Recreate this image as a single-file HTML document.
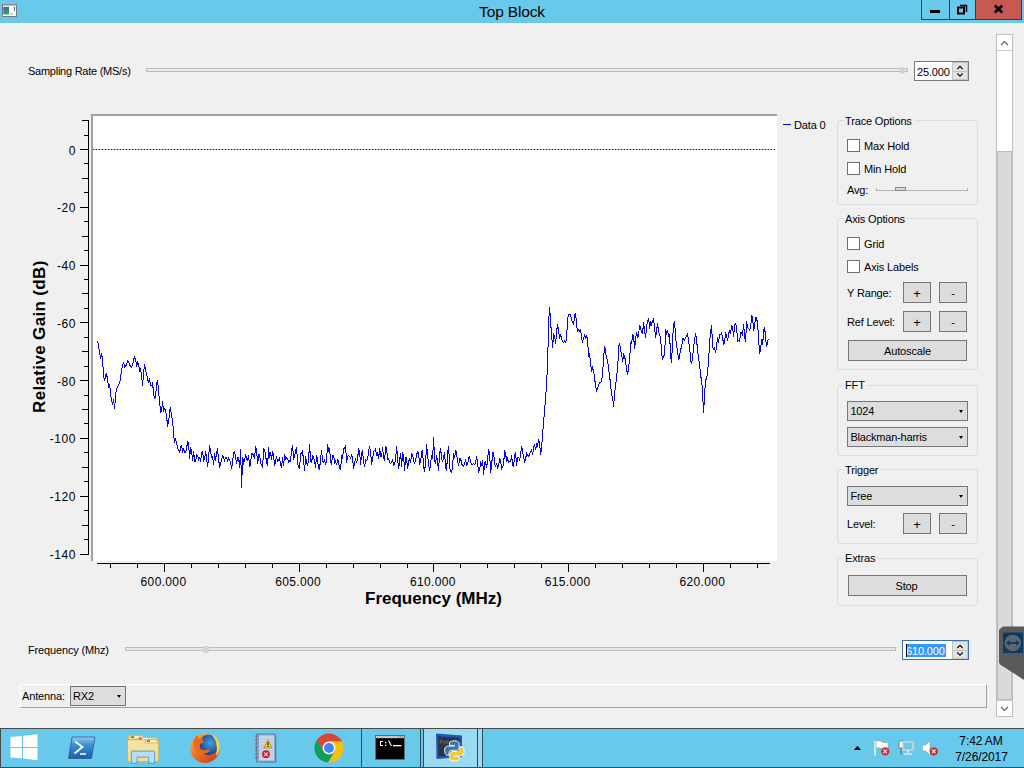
<!DOCTYPE html>
<html><head><meta charset="utf-8">
<style>
*{box-sizing:border-box}
html,body{margin:0;padding:0;width:1024px;height:768px;overflow:hidden;background:#f0f0f0;font-family:"Liberation Sans",sans-serif;color:#000}
.a{position:absolute}
.t{position:absolute;font-size:11px;line-height:11px;white-space:nowrap;letter-spacing:-0.15px}
#title{position:absolute;left:0;top:0;width:1024px;height:23px;background:#69c9ea}
#title .cap{position:absolute;left:0;width:1024px;top:3.5px;text-align:center;font-size:15.5px;line-height:15.5px;letter-spacing:-0.15px;color:#000}
.wb{position:absolute;top:0;height:20px;border:1px solid #3a3a3a;border-top:none}
.grp{position:absolute;left:837px;width:141px;border:1px solid #d5dfe5;border-radius:3px}
.gt{position:absolute;left:845px;font-size:11px;line-height:11px;background:#f0f0f0;padding:0 2px 0 1px;margin-left:-1px;letter-spacing:-0.15px}
.cb{position:absolute;left:847px;width:13px;height:13px;border:1px solid #707070;background:#fff}
.btn{position:absolute;background:#dddddd;border:1px solid #767676;font-size:11px;text-align:center;line-height:20px;letter-spacing:-0.15px}
.pl{font-size:13px;line-height:21px}
.combo{position:absolute;background:#dddddd;border:1px solid #767676;font-size:11px;line-height:18px;padding-left:2.4px;letter-spacing:-0.2px}
.combo:after{content:"";position:absolute;right:4px;top:8px;border-left:2.5px solid transparent;border-right:2.5px solid transparent;border-top:3px solid #000}
.yl{position:absolute;left:30px;width:45.9px;text-align:right;font-size:12px;line-height:14px;letter-spacing:0.5px;margin-top:1px}
.xl{position:absolute;top:575px;width:60px;text-align:center;font-size:12px;line-height:14px;letter-spacing:0.35px}
#task{position:absolute;left:0;top:728px;width:1024px;height:40px;background:#69c9ea;border-top:1px solid #4a4a4a}
</style></head><body>

<!-- title bar -->
<div id="title">
  <svg class="a" style="left:2px;top:4px" width="16" height="14" viewBox="0 0 16 14">
    <rect x="0.5" y="0.5" width="14" height="12" fill="#fff" stroke="#7a7a7a"/>
    <rect x="1" y="0" width="14" height="1.5" fill="#8a8a8a"/>
    <defs><linearGradient id="ig" x1="0" y1="0" x2="0" y2="1"><stop offset="0" stop-color="#3a66b0"/><stop offset="1" stop-color="#3aa84a"/></linearGradient></defs>
    <rect x="1.2" y="2.8" width="5.8" height="7.7" fill="url(#ig)"/>
    <rect x="11.9" y="2.8" width="1.2" height="4.2" fill="url(#ig)"/>
    <rect x="8" y="9.1" width="3" height="1.7" fill="#c8c8c8"/>
  </svg>
  <div class="cap">Top Block</div>
  <div class="wb" style="left:921px;width:29px;background:#69c9ea"></div>
  <div class="wb" style="left:949px;width:27px;background:#69c9ea"></div>
  <div class="wb" style="left:975px;width:47px;background:#c75a50"></div>
  <div class="a" style="left:930px;top:10px;width:10px;height:3px;background:#000"></div>
  <svg class="a" style="left:957px;top:4px" width="11" height="11" viewBox="0 0 11 11">
    <path d="M3 1.5 H9.5 V8" fill="none" stroke="#000" stroke-width="1.5"/>
    <rect x="1" y="3.5" width="6" height="6" fill="none" stroke="#000" stroke-width="2"/>
  </svg>
  <svg class="a" style="left:993px;top:3.5px" width="11" height="10" viewBox="0 0 11 10">
    <path d="M1.8 1.5 L9.2 8.5 M9.2 1.5 L1.8 8.5" stroke="#000" stroke-width="2.6"/>
  </svg>
</div>

<!-- sampling rate row -->
<div class="t" style="left:28px;top:66px;letter-spacing:-0.25px">Sampling Rate (MS/s)</div>
<div class="a" style="left:146px;top:68px;width:762px;height:4px;background:#e7eaea;border:1px solid #bcbcbc"></div>
<div class="a" style="left:899.5px;top:66.5px;width:5.5px;height:7px;background:#d4d4d4;border-radius:2.5px"></div>
<div class="a" style="left:914px;top:61px;width:55px;height:20px;background:#fff;border:1px solid #7a7a7a"></div>
<div class="t" style="left:917px;top:67px">25.000</div>
<div class="a" style="left:952px;top:62px;width:16px;height:10px;background:#e3e3e3;border:1px solid #c4c4c4"></div>
<div class="a" style="left:952px;top:71px;width:16px;height:9px;background:#e3e3e3;border:1px solid #c4c4c4"></div>
<svg class="a" style="left:955px;top:63px" width="10" height="18" viewBox="0 0 10 18">
  <path d="M2.3 6 L5 3.3 L7.7 6 M2.3 10.5 L5 13.2 L7.7 10.5" fill="none" stroke="#111" stroke-width="1.2"/>
</svg>

<!-- plot -->
<div class="a" style="left:91px;top:114px;width:686px;height:447px;background:#fff;border-left:2px solid #a0a0a0;border-top:2px solid #a0a0a0"></div>
<svg class="a" style="left:0;top:0" width="1024" height="768" viewBox="0 0 1024 768">
  <g stroke="#000" stroke-width="1" shape-rendering="crispEdges">
<line x1="88.5" y1="120" x2="88.5" y2="555" />
<line x1="82" y1="120.5" x2="89" y2="120.5" />
<line x1="84" y1="135.5" x2="89" y2="135.5" />
<line x1="80" y1="149.5" x2="89" y2="149.5" />
<line x1="84" y1="163.5" x2="89" y2="163.5" />
<line x1="82" y1="178.5" x2="89" y2="178.5" />
<line x1="84" y1="192.5" x2="89" y2="192.5" />
<line x1="80" y1="207.5" x2="89" y2="207.5" />
<line x1="84" y1="221.5" x2="89" y2="221.5" />
<line x1="82" y1="236.5" x2="89" y2="236.5" />
<line x1="84" y1="250.5" x2="89" y2="250.5" />
<line x1="80" y1="265.5" x2="89" y2="265.5" />
<line x1="84" y1="279.5" x2="89" y2="279.5" />
<line x1="82" y1="293.5" x2="89" y2="293.5" />
<line x1="84" y1="308.5" x2="89" y2="308.5" />
<line x1="80" y1="322.5" x2="89" y2="322.5" />
<line x1="84" y1="337.5" x2="89" y2="337.5" />
<line x1="82" y1="351.5" x2="89" y2="351.5" />
<line x1="84" y1="366.5" x2="89" y2="366.5" />
<line x1="80" y1="380.5" x2="89" y2="380.5" />
<line x1="84" y1="395.5" x2="89" y2="395.5" />
<line x1="82" y1="409.5" x2="89" y2="409.5" />
<line x1="84" y1="423.5" x2="89" y2="423.5" />
<line x1="80" y1="438.5" x2="89" y2="438.5" />
<line x1="84" y1="452.5" x2="89" y2="452.5" />
<line x1="82" y1="467.5" x2="89" y2="467.5" />
<line x1="84" y1="481.5" x2="89" y2="481.5" />
<line x1="80" y1="496.5" x2="89" y2="496.5" />
<line x1="84" y1="510.5" x2="89" y2="510.5" />
<line x1="82" y1="525.5" x2="89" y2="525.5" />
<line x1="84" y1="539.5" x2="89" y2="539.5" />
<line x1="80" y1="554.5" x2="89" y2="554.5" />
<line x1="97" y1="563.5" x2="770" y2="563.5" />
<line x1="110.5" y1="563" x2="110.5" y2="568" />
<line x1="137.5" y1="563" x2="137.5" y2="568" />
<line x1="164.5" y1="563" x2="164.5" y2="572" />
<line x1="191.5" y1="563" x2="191.5" y2="568" />
<line x1="218.5" y1="563" x2="218.5" y2="568" />
<line x1="245.5" y1="563" x2="245.5" y2="568" />
<line x1="272.5" y1="563" x2="272.5" y2="568" />
<line x1="299.5" y1="563" x2="299.5" y2="572" />
<line x1="326.5" y1="563" x2="326.5" y2="568" />
<line x1="353.5" y1="563" x2="353.5" y2="568" />
<line x1="380.5" y1="563" x2="380.5" y2="568" />
<line x1="407.5" y1="563" x2="407.5" y2="568" />
<line x1="433.5" y1="563" x2="433.5" y2="572" />
<line x1="460.5" y1="563" x2="460.5" y2="568" />
<line x1="487.5" y1="563" x2="487.5" y2="568" />
<line x1="514.5" y1="563" x2="514.5" y2="568" />
<line x1="541.5" y1="563" x2="541.5" y2="568" />
<line x1="568.5" y1="563" x2="568.5" y2="572" />
<line x1="595.5" y1="563" x2="595.5" y2="568" />
<line x1="622.5" y1="563" x2="622.5" y2="568" />
<line x1="649.5" y1="563" x2="649.5" y2="568" />
<line x1="676.5" y1="563" x2="676.5" y2="568" />
<line x1="703.5" y1="563" x2="703.5" y2="572" />
<line x1="730.5" y1="563" x2="730.5" y2="568" />
<line x1="757.5" y1="563" x2="757.5" y2="568" />
  </g>
  <line x1="93" y1="149.5" x2="775" y2="149.5" stroke="#00ffff" stroke-width="1" shape-rendering="crispEdges"/>
  <line x1="93" y1="149.5" x2="775" y2="149.5" stroke="#800000" stroke-width="1" stroke-dasharray="1 2" shape-rendering="crispEdges"/>
  <polyline points="97.6,340.9 98.6,346.2 99.6,352.7 100.6,359.1 101.6,353.5 102.6,360.8 103.6,376.0 104.6,381.2 105.6,374.9 106.6,373.9 107.6,380.0 108.6,386.4 109.6,384.0 110.6,394.2 111.6,400.9 112.6,403.6 113.6,398.6 114.6,409 115.6,393.8 116.6,388.9 117.6,387.1 118.6,384.3 119.6,383.5 120.6,377.8 121.6,369.0 122.6,366.1 123.6,361.8 124.6,367.2 125.6,365.7 126.6,364.9 127.6,360.9 128.6,362.1 129.6,365.0 130.6,366.0 131.6,367.2 132.6,364.7 133.6,359.8 134.6,356.9 135.6,359.0 136.6,366.8 137.6,362.5 138.6,364.7 139.6,370.7 140.6,368.9 141.6,375.5 142.6,386.4 143.6,372.0 144.6,364.1 145.6,371.1 146.6,373.1 147.6,379.3 148.6,382.0 149.6,379.4 150.6,385.0 151.6,385.7 152.6,383.4 153.6,393.4 154.6,399.1 155.6,395.8 156.6,383.4 157.6,381.2 158.6,391.1 159.6,402.4 160.6,412.1 161.6,410.6 162.6,401.4 163.6,411.5 164.6,408.8 165.6,410.0 166.6,417.3 167.6,425.1 168.6,422.6 169.6,411.0 170.6,407.4 171.6,417.6 172.6,418.5 173.6,435.5 174.6,441.8 175.6,439.2 176.6,442.8 177.6,448.0 178.6,450.2 179.6,452.4 180.6,447.8 181.6,444.7 182.6,452.9 183.6,447.9 184.6,452.4 185.6,452.9 186.6,448.7 187.6,441.0 188.6,443.9 189.6,458.5 190.6,448.3 191.6,450.3 192.6,461.4 193.6,451.3 194.6,461.4 195.6,461.9 196.6,455.0 197.6,455.3 198.6,459.4 199.6,457.7 200.6,461.9 201.6,453.5 202.6,450.8 203.6,460.9 204.6,459.4 205.6,450.6 206.6,458.7 207.6,467.2 208.6,456.7 209.6,445.2 210.6,451.5 211.6,457.2 212.6,456.5 213.6,464.5 214.6,453.5 215.6,460.5 216.6,451.7 217.6,449.4 218.6,459.5 219.6,466.7 220.6,464.6 221.6,458.8 222.6,456.2 223.6,457.1 224.6,460.7 225.6,457.3 226.6,457.7 227.6,460.6 228.6,458.1 229.6,460.9 230.6,461.4 231.6,469.1 232.6,461.9 233.6,452.8 234.6,452.0 235.6,456.6 236.6,463.9 237.6,457.8 238.6,457.7 239.6,467.9 240.6,449.3 241.6,488 242.6,456.7 243.6,463.2 244.6,460.9 245.6,454.3 246.6,459.0 247.6,460.5 248.6,454.9 249.6,467.2 250.6,463.6 251.6,453.4 252.6,453.6 253.6,456.0 254.6,457.7 255.6,446.4 256.6,450.7 257.6,464.3 258.6,455.1 259.6,454.2 260.6,462.6 261.6,465.2 262.6,467.4 263.6,448.8 264.6,449.5 265.6,455.4 266.6,462.9 267.6,466.4 268.6,447.5 269.6,457.8 270.6,452.3 271.6,459.7 272.6,451.3 273.6,455.9 274.6,465.9 275.6,460.2 276.6,457.2 277.6,461.4 278.6,460.0 279.6,456.9 280.6,465.7 281.6,466.9 282.6,456.9 283.6,466.4 284.6,454.4 285.6,459.4 286.6,457.9 287.6,458.2 288.6,462.0 289.6,460.5 290.6,461.3 291.6,449.4 292.6,445.2 293.6,459.6 294.6,456.7 295.6,451.1 296.6,447.4 297.6,463.7 298.6,467.5 299.6,468.2 300.6,453.3 301.6,453.3 302.6,451.2 303.6,461.5 304.6,470.5 305.6,456.2 306.6,462.7 307.6,465.9 308.6,458.3 309.6,444.3 310.6,461.3 311.6,462.7 312.6,455.2 313.6,457.9 314.6,461.2 315.6,467.8 316.6,454.6 317.6,460.4 318.6,468.5 319.6,469.4 320.6,457.8 321.6,450.2 322.6,461.2 323.6,462.1 324.6,459.2 325.6,465.4 326.6,458.7 327.6,444.4 328.6,450.8 329.6,448.8 330.6,461.7 331.6,463.9 332.6,455.4 333.6,455.3 334.6,462.7 335.6,460.9 336.6,465.3 337.6,459.3 338.6,462.3 339.6,467.8 340.6,469.5 341.6,455.2 342.6,458.7 343.6,448.2 344.6,448.1 345.6,446.1 346.6,463.0 347.6,456.2 348.6,455.8 349.6,456.7 350.6,458.0 351.6,455.0 352.6,458.3 353.6,469.4 354.6,462.2 355.6,459.1 356.6,462.9 357.6,458.2 358.6,449.3 359.6,451.7 360.6,464.6 361.6,452.7 362.6,450.7 363.6,462.9 364.6,466.5 365.6,459.6 366.6,460.7 367.6,459.4 368.6,450.9 369.6,446.0 370.6,452.2 371.6,464.9 372.6,458.9 373.6,451.0 374.6,450.8 375.6,448.7 376.6,456.2 377.6,453.3 378.6,459.0 379.6,448.2 380.6,456.2 381.6,456.6 382.6,446.8 383.6,458.7 384.6,460.0 385.6,446.9 386.6,448.4 387.6,459.7 388.6,458.8 389.6,462.3 390.6,463.6 391.6,462.5 392.6,459.8 393.6,465.0 394.6,463.7 395.6,460.5 396.6,445.6 397.6,458.1 398.6,469.4 399.6,460.2 400.6,452.6 401.6,466.7 402.6,452.5 403.6,456.2 404.6,470.6 405.6,457.6 406.6,458.1 407.6,469.1 408.6,461.2 409.6,459.0 410.6,462.6 411.6,454.1 412.6,454.7 413.6,459.7 414.6,464.4 415.6,459.5 416.6,455.5 417.6,450.8 418.6,454.1 419.6,464.0 420.6,461.8 421.6,452.6 422.6,450.1 423.6,468.4 424.6,470.6 425.6,463.0 426.6,444.4 427.6,455.3 428.6,463.9 429.6,470.7 430.6,463.1 431.6,455.6 432.6,458.7 433.6,437 434.6,460.2 435.6,463.7 436.6,455.3 437.6,463.0 438.6,471.1 439.6,452.9 440.6,448.5 441.6,458.1 442.6,462.3 443.6,457.7 444.6,451.6 445.6,468.3 446.6,470.5 447.6,453.5 448.6,446.1 449.6,466.5 450.6,471.8 451.6,472.6 452.6,465.5 453.6,453.2 454.6,457.8 455.6,450.1 456.6,453.4 457.6,461.1 458.6,466.2 459.6,458.7 460.6,458.1 461.6,463.7 462.6,465.5 463.6,466.1 464.6,463.5 465.6,459.4 466.6,465.4 467.6,464.6 468.6,457.6 469.6,456.7 470.6,462.2 471.6,464.0 472.6,464.6 473.6,463.6 474.6,464.2 475.6,463.1 476.6,456.1 477.6,463.9 478.6,472.5 479.6,469.8 480.6,462.8 481.6,465.0 482.6,459.8 483.6,475 484.6,462.1 485.6,461.9 486.6,468.2 487.6,459.6 488.6,449.0 489.6,453.1 490.6,472.5 491.6,466.4 492.6,452.3 493.6,452.4 494.6,463.7 495.6,467.2 496.6,462.8 497.6,467.4 498.6,465.5 499.6,458.9 500.6,460.4 501.6,468.8 502.6,467.1 503.6,464.0 504.6,451.0 505.6,452.6 506.6,461.9 507.6,458.5 508.6,462.2 509.6,461.5 510.6,461.7 511.6,455.3 512.6,465.5 513.6,466.4 514.6,455.0 515.6,452.2 516.6,465.6 517.6,457.2 518.6,457.1 519.6,460.0 520.6,455.1 521.6,445.6 522.6,451.4 523.6,457.1 524.6,461.6 525.6,459.3 526.6,452.6 527.6,455.5 528.6,456.6 529.6,454.0 530.6,451.7 531.6,449.8 532.6,455.0 533.6,447.1 534.6,445.1 535.6,450.2 536.6,443.9 537.6,446.0 538.6,439.3 539.6,443.8 540.6,454.5 541.6,447.8 542.6,434.0 543.6,421.5 544.6,409.7 545.6,399.2 546.6,382.3 547.6,365.0 548.6,321.9 549.6,307 550.6,322.4 551.6,334.7 552.6,348.0 553.6,334.1 554.6,335.8 555.6,343.7 556.6,331.2 557.6,324.5 558.6,331.0 559.6,339.0 560.6,334.6 561.6,338.4 562.6,341.4 563.6,342.3 564.6,340.8 565.6,342.4 566.6,338.6 567.6,318.8 568.6,314.9 569.6,314.6 570.6,314.7 571.6,320.1 572.6,322.0 573.6,325.0 574.6,314.3 575.6,313.4 576.6,325.6 577.6,330.8 578.6,330.0 579.6,331.4 580.6,329.5 581.6,338.7 582.6,341.6 583.6,338.5 584.6,334.1 585.6,339.4 586.6,334.8 587.6,341.3 588.6,355.5 589.6,353.8 590.6,363.9 591.6,372.4 592.6,366.5 593.6,371.8 594.6,378.1 595.6,386.1 596.6,390.7 597.6,388.7 598.6,384.4 599.6,383.0 600.6,382.2 601.6,381.7 602.6,373.2 603.6,358.3 604.6,345.6 605.6,352.1 606.6,358.6 607.6,359.8 608.6,369.5 609.6,375.8 610.6,384.8 611.6,395.2 612.6,396.9 613.6,407.3 614.6,391.9 615.6,387.1 616.6,375.6 617.6,370.1 618.6,347.0 619.6,343.3 620.6,350.4 621.6,353.4 622.6,362.3 623.6,354.5 624.6,356.5 625.6,361.4 626.6,369.7 627.6,374.8 628.6,366.7 629.6,359.9 630.6,343.1 631.6,343.8 632.6,335.3 633.6,336.3 634.6,349.0 635.6,338.7 636.6,331.7 637.6,338.2 638.6,334.5 639.6,325.0 640.6,328.1 641.6,332.9 642.6,333.2 643.6,321.8 644.6,331.9 645.6,337.6 646.6,325.8 647.6,320.9 648.6,317.9 649.6,328.9 650.6,321.2 651.6,324.3 652.6,321.4 653.6,319.1 654.6,328.7 655.6,337.6 656.6,330.7 657.6,322.7 658.6,332.2 659.6,333.8 660.6,338.5 661.6,352.9 662.6,360.4 663.6,355.5 664.6,355.9 665.6,328.8 666.6,333.4 667.6,330.8 668.6,336.8 669.6,333.8 670.6,357.1 671.6,362.6 672.6,339.1 673.6,324.3 674.6,321.3 675.6,337.5 676.6,345.1 677.6,351.1 678.6,359.6 679.6,357.1 680.6,348.2 681.6,348.5 682.6,338.3 683.6,338.8 684.6,340.3 685.6,337.5 686.6,335.8 687.6,333.0 688.6,342.5 689.6,346.3 690.6,360.7 691.6,363.3 692.6,358.0 693.6,346.6 694.6,339.7 695.6,333.1 696.6,340.0 697.6,350.8 698.6,358.5 699.6,363.5 700.6,377.0 701.6,377.7 702.6,394.9 703.6,413 704.6,393.2 705.6,380.3 706.6,378.5 707.6,371.7 708.6,360.2 709.6,342.6 710.6,331.8 711.6,325.4 712.6,346.6 713.6,349.0 714.6,347.6 715.6,352.9 716.6,345.7 717.6,337.3 718.6,342.5 719.6,334.9 720.6,334.3 721.6,332.8 722.6,337.6 723.6,344.4 724.6,343.0 725.6,331.9 726.6,335.9 727.6,341.4 728.6,334.1 729.6,330.3 730.6,334.3 731.6,324.8 732.6,327.4 733.6,336.5 734.6,324.9 735.6,324.0 736.6,327.3 737.6,341.4 738.6,340.3 739.6,341.7 740.6,332.9 741.6,333.0 742.6,335.0 743.6,323.8 744.6,337.7 745.6,341.5 746.6,321.3 747.6,327.2 748.6,328.8 749.6,330.0 750.6,328.3 751.6,314.8 752.6,317.3 753.6,331.4 754.6,324.6 755.6,317.7 756.6,317.9 757.6,324.0 758.6,338.8 759.6,353.5 760.6,349.7 761.6,338.7 762.6,345.1 763.6,331.5 764.6,326.8 765.6,338.3 766.6,347.2 767.6,341.0 768.6,338.9" fill="none" stroke="#0000ff" stroke-width="1" shape-rendering="crispEdges"/>
  <line x1="783" y1="124.5" x2="791" y2="124.5" stroke="#0000ff" stroke-width="1" shape-rendering="crispEdges"/>
</svg>
<div class="yl" style="top:142.5px">0</div><div class="yl" style="top:200.3px">-20</div><div class="yl" style="top:258.1px">-40</div><div class="yl" style="top:315.9px">-60</div><div class="yl" style="top:373.6px">-80</div><div class="yl" style="top:431.4px">-100</div><div class="yl" style="top:489.2px">-120</div><div class="yl" style="top:547.0px">-140</div>
<div class="xl" style="left:133.5px">600.000</div><div class="xl" style="left:268.2px">605.000</div><div class="xl" style="left:402.9px">610.000</div><div class="xl" style="left:537.7px">615.000</div><div class="xl" style="left:672.4px">620.000</div>
<div class="t" style="left:794px;top:120px">Data 0</div>
<div class="a" style="left:31px;top:413px;transform-origin:0 0;transform:rotate(-90deg);font-size:17px;line-height:17px;font-weight:bold;white-space:nowrap;letter-spacing:0.35px">Relative Gain (dB)</div>
<div class="a" style="left:365px;top:590px;font-size:17px;line-height:17px;font-weight:bold;white-space:nowrap">Frequency (MHz)</div>

<!-- right panel -->
<div class="grp" style="top:120px;height:85px"></div>
<div class="gt" style="top:116px">Trace Options</div>
<div class="cb" style="top:139px"></div><div class="t" style="left:864px;top:141px">Max Hold</div>
<div class="cb" style="top:162px"></div><div class="t" style="left:864px;top:164px">Min Hold</div>
<div class="t" style="left:847px;top:185px">Avg:</div>
<div class="a" style="left:876px;top:188px;width:92px;height:3px;border:1px solid #b5b5b5;border-top:none"></div>
<div class="a" style="left:895px;top:187px;width:11px;height:4px;background:#d8d8d8;border:1px solid #8a8a8a"></div>

<div class="grp" style="top:218px;height:152px"></div>
<div class="gt" style="top:214px">Axis Options</div>
<div class="cb" style="top:237px"></div><div class="t" style="left:864px;top:239px">Grid</div>
<div class="cb" style="top:260px"></div><div class="t" style="left:864px;top:262px">Axis Labels</div>
<div class="t" style="left:847px;top:288px">Y Range:</div>
<div class="btn pl" style="left:903px;top:282px;width:28px;height:21px">+</div>
<div class="btn" style="left:939px;top:282px;width:28px;height:21px">-</div>
<div class="t" style="left:847px;top:317px">Ref Level:</div>
<div class="btn pl" style="left:903px;top:311px;width:28px;height:21px">+</div>
<div class="btn" style="left:939px;top:311px;width:28px;height:21px">-</div>
<div class="btn" style="left:848px;top:340px;width:119px;height:21px">Autoscale</div>

<div class="grp" style="top:385px;height:71px"></div>
<div class="gt" style="top:380px">FFT</div>
<div class="combo" style="left:847px;top:401px;width:121px;height:20px">1024</div>
<div class="combo" style="left:847px;top:427px;width:121px;height:20px">Blackman-harris</div>

<div class="grp" style="top:469px;height:75px"></div>
<div class="gt" style="top:465px">Trigger</div>
<div class="combo" style="left:847px;top:486px;width:121px;height:20px">Free</div>
<div class="t" style="left:847px;top:519px">Level:</div>
<div class="btn pl" style="left:903px;top:513px;width:28px;height:21px">+</div>
<div class="btn" style="left:939px;top:513px;width:28px;height:21px">-</div>

<div class="grp" style="top:558px;height:48px"></div>
<div class="gt" style="top:553px">Extras</div>
<div class="btn" style="left:848px;top:575px;width:119px;height:21px;padding-right:2px;line-height:21px">Stop</div>

<!-- frequency row -->
<div class="t" style="left:28px;top:645px">Frequency (Mhz)</div>
<div class="a" style="left:125px;top:647px;width:771px;height:4px;background:#e7eaea;border:1px solid #bcbcbc"></div>
<div class="a" style="left:203px;top:645.5px;width:5.5px;height:7px;background:#d4d4d4;border-radius:2.5px"></div>
<div class="a" style="left:902px;top:640px;width:67px;height:20px;background:#fff;border:1px solid #3c6fb0"></div>
<div class="a" style="left:906px;top:644px;width:40px;height:13px;background:#3399ff"></div>
<div class="t" style="left:906px;top:646px;color:#fff">610.000</div>
<div class="a" style="left:906px;top:644px;width:1px;height:13px;background:#000"></div>
<div class="a" style="left:952px;top:641px;width:16px;height:10px;background:#e3e3e3;border:1px solid #c4c4c4"></div>
<div class="a" style="left:952px;top:650px;width:16px;height:9px;background:#e3e3e3;border:1px solid #c4c4c4"></div>
<svg class="a" style="left:955px;top:642px" width="10" height="18" viewBox="0 0 10 18">
  <path d="M2.3 6 L5 3.3 L7.7 6 M2.3 10.5 L5 13.2 L7.7 10.5" fill="none" stroke="#111" stroke-width="1.2"/>
</svg>

<!-- antenna row -->
<div class="a" style="left:20px;top:684px;width:967px;height:24px;border-top:1px solid #fff;border-left:1px solid #fff;border-bottom:1px solid #a0a0a0;border-right:1px solid #a0a0a0"></div>
<div class="t" style="left:22px;top:691px">Antenna:</div>
<div class="combo" style="left:70px;top:686px;width:56px;height:20px;padding-left:2px">RX2</div>

<!-- scrollbar -->
<div class="a" style="left:996px;top:34px;width:17px;height:683px;border:1px solid #bfbfbf;background:#fff"></div>
<div class="a" style="left:997px;top:50px;width:15px;height:1px;background:#c8c8c8"></div>
<div class="a" style="left:997px;top:151px;width:15px;height:549px;background:#dadada;border:1px solid #bcbcbc"></div>
<div class="a" style="left:997px;top:700px;width:15px;height:1px;background:#c8c8c8"></div>
<svg class="a" style="left:997px;top:37px" width="15" height="14" viewBox="0 0 15 14"><path d="M4 8 L7.5 4.5 L11 8" fill="none" stroke="#606060" stroke-width="1.2"/></svg>
<svg class="a" style="left:997px;top:702px" width="15" height="14" viewBox="0 0 15 14"><path d="M4 5 L7.5 8.5 L11 5" fill="none" stroke="#606060" stroke-width="1.2"/></svg>

<!-- teamviewer tab -->
<svg class="a" style="left:998px;top:625.5px" width="26" height="56" viewBox="0 0 26 56">
  <path d="M3.5 1.5 L5 0.5 L26 0.5 L26 54 L6 41 Q1 38.5 1 36 V4 Z" fill="#5a5a5a"/>
  <rect x="5" y="6.5" width="20" height="20.5" fill="#0c3a62"/>
  <circle cx="14.8" cy="17" r="8.3" fill="#5b6670"/>
  <path d="M9 17 L20.6 17" stroke="#0c3a62" stroke-width="1.8"/>
  <path d="M8 17 L11.5 14 V20 Z M21.6 17 L18.1 14 V20 Z" fill="#0c3a62"/>
</svg>

<!-- taskbar -->
<div id="task"></div>
<svg class="a" style="left:0;top:728px" width="1024" height="40" viewBox="0 728 1024 40">
  <!-- borders -->
  <rect x="0" y="728" width="1024" height="1" fill="#4a4a4a"/>
  <rect x="0" y="767" width="1024" height="1" fill="#4a4a4a"/>
  <rect x="0" y="728" width="1" height="40" fill="#4a4a4a"/>
  <!-- windows logo -->
  <g fill="#fff">
    <polygon points="10.5,737 22,735.9 22,747 10.5,747"/>
    <polygon points="23,735.7 37.5,734.3 37.5,747 23,747"/>
    <polygon points="10.5,748 22,748 22,758.4 10.5,757.4"/>
    <polygon points="23,748 37.5,748 37.5,760.3 23,758.5"/>
  </g>
  <!-- powershell -->
  <defs>
    <linearGradient id="psg" x1="0" y1="0" x2="0" y2="1"><stop offset="0" stop-color="#9cc9ee"/><stop offset="0.35" stop-color="#3f8fd6"/><stop offset="1" stop-color="#1b5fae"/></linearGradient>
    <linearGradient id="fold" x1="0" y1="0" x2="0" y2="1"><stop offset="0" stop-color="#fbe7a6"/><stop offset="1" stop-color="#eccb6a"/></linearGradient>
    <radialGradient id="ffg" cx="0.6" cy="0.4" r="0.6"><stop offset="0" stop-color="#3ea0e0"/><stop offset="1" stop-color="#1d3f8a"/></radialGradient>
    <linearGradient id="fxo" x1="0" y1="0" x2="1" y2="1"><stop offset="0" stop-color="#ffb43a"/><stop offset="0.6" stop-color="#e8601c"/><stop offset="1" stop-color="#c8361a"/></linearGradient>
  </defs>
  <polygon points="72,737 95,737 91.5,758.5 68.5,758.5" fill="url(#psg)" stroke="#2a5d9a" stroke-width="0.8"/>
  <path d="M75 741.5 L82.5 747 L74.5 753.5" fill="none" stroke="#fff" stroke-width="1.8"/>
  <path d="M80 754 L86 754" stroke="#fff" stroke-width="1.5"/>
  <!-- explorer -->
  <path d="M128.5 739.5 V736 Q128.5 735.2 129.5 735.2 H143 Q143.8 735.2 143.8 736 V739.5 Z" fill="#f0d890" stroke="#d2a850" stroke-width="0.6"/>
  <rect x="131" y="736.2" width="3.2" height="1.8" fill="#1cc01c"/>
  <rect x="134.2" y="736.4" width="5.6" height="1.4" fill="#fff"/>
  <path d="M137.6 741 V738.2 Q137.6 737.4 138.6 737.4 H156.8 Q157.6 737.4 157.6 738.2 V741 Z" fill="#f0d890" stroke="#d2a850" stroke-width="0.6"/>
  <rect x="139" y="737.9" width="2.8" height="2" fill="#d83a24"/>
  <rect x="141.8" y="738.2" width="5.8" height="1.4" fill="#fff"/>
  <rect x="127.4" y="739.8" width="31.2" height="22" rx="0.8" fill="url(#fold)" stroke="#d2a850" stroke-width="0.8"/>
  <path d="M145.2 743.8 V740.4 Q145.2 739.6 146 739.6 H157.6 Q158.2 739.6 158.2 740.4 V743.8 Z" fill="#f0d890" stroke="#d2a850" stroke-width="0.6"/>
  <rect x="147" y="740.2" width="3" height="1.8" fill="#1e90e8"/>
  <rect x="150" y="740.4" width="5.2" height="1.4" fill="#fff"/>
  <rect x="128.4" y="743.6" width="29.4" height="17.4" fill="#f7e3a0" opacity="0.7"/>
  <path d="M131.3 763.2 V752.2 Q131.3 751.1 132.4 751.1 H153.6 Q154.7 751.1 154.7 752.2 V763.2 H148.7 V757.2 H137.1 V763.2 Z" fill="#b6def4" stroke="#3d9ad8" stroke-width="0.9"/>
  <!-- firefox -->
  <circle cx="205" cy="748.5" r="14.5" fill="url(#fxo)"/>
  <circle cx="208.5" cy="745" r="10.2" fill="url(#ffg)"/>
  <path d="M193.5 741 Q195 736 197.5 735.5 L198.5 739 Q201 738 203 736.5 L202 740.5 Q204.5 741.5 203.5 743 L200.5 743.5 Q198.5 747 201.5 749.5 Q205 751 208 749.5 L210.5 750 Q208 753.5 202.5 754 Q195.5 752.5 193.5 746 Z" fill="#ea6a1e"/>
  <path d="M210.5 734.2 Q218.5 736.5 219.8 746 Q219.8 752 216 756 Q217.8 749 216.2 742.5 Q214.5 737 210.5 734.2 Z" fill="#ffd23a"/>
  <!-- event viewer -->
  <path d="M258 762 L277 763 L277 736 Z" fill="#4a8ab0" opacity="0.35"/>
  <rect x="256.5" y="734" width="19" height="28" fill="#8ea8d0" stroke="#56709e" stroke-width="0.8"/>
  <rect x="259" y="735.5" width="15" height="25" fill="#c6d4ec"/>
  <g stroke="#a8b8d4" stroke-width="0.6"><line x1="259" y1="739" x2="274" y2="739"/><line x1="259" y1="742" x2="274" y2="742"/><line x1="259" y1="745" x2="274" y2="745"/><line x1="259" y1="748" x2="274" y2="748"/><line x1="259" y1="751" x2="274" y2="751"/><line x1="259" y1="754" x2="274" y2="754"/><line x1="259" y1="757" x2="274" y2="757"/></g>
  <g fill="none" stroke="#7a7f8a" stroke-width="0.8">
    <ellipse cx="256.5" cy="736.5" rx="1.6" ry="1"/><ellipse cx="256.5" cy="740" rx="1.6" ry="1"/><ellipse cx="256.5" cy="743.5" rx="1.6" ry="1"/><ellipse cx="256.5" cy="747" rx="1.6" ry="1"/><ellipse cx="256.5" cy="750.5" rx="1.6" ry="1"/><ellipse cx="256.5" cy="754" rx="1.6" ry="1"/><ellipse cx="256.5" cy="757.5" rx="1.6" ry="1"/>
  </g>
  <polygon points="268,739.8 272.2,748 263.8,748" fill="#f4d000" stroke="#8a7000" stroke-width="0.5"/>
  <rect x="267.5" y="742.3" width="1" height="3" fill="#000"/><rect x="267.5" y="746" width="1" height="1" fill="#000"/>
  <circle cx="266" cy="754.2" r="3.9" fill="#d42020"/>
  <path d="M264.4 752.6 L267.6 755.8 M267.6 752.6 L264.4 755.8" stroke="#fff" stroke-width="1.1"/>
  <!-- chrome -->
  <g transform="translate(329,748)">
    <path d="M-12.1 -8.16 A14.6 14.6 0 0 1 13.12 -6.4 L0 -6.4 L0 0 L-5.54 3.2 Z" fill="#db4437"/>
    <path d="M13.12 -6.4 A14.6 14.6 0 0 1 -1.02 14.56 L5.54 3.2 L0 0 L0 -6.4 Z" fill="#f4c20d"/>
    <path d="M-1.02 14.56 A14.6 14.6 0 0 1 -12.1 -8.16 L-5.54 3.2 L0 0 L5.54 3.2 Z" fill="#0f9d58"/>
    <circle r="6.4" fill="#fff"/>
    <circle r="5" fill="#4285f4"/>
  </g>
  <!-- cmd button frame -->
  <rect x="361" y="729" width="1" height="38" fill="#2f4b56"/>
  <rect x="420" y="729" width="1" height="38" fill="#2f4b56"/>
  <rect x="424" y="729" width="54" height="38" fill="#9bdaf0"/>
  <rect x="423" y="729" width="1" height="38" fill="#2f4b56"/>
  <rect x="477" y="729" width="1" height="38" fill="#2f4b56"/>
  <rect x="478" y="729" width="4" height="38" fill="#9bdaf0"/>
  <rect x="482" y="729" width="1" height="38" fill="#2f4b56"/>
  <!-- cmd icon -->
  <rect x="375.5" y="735.5" width="29" height="24" fill="#000" stroke="#6a6a6a" stroke-width="0.9"/>
  <rect x="376" y="736" width="28" height="2.2" fill="#c8c8c8"/>
  <rect x="398" y="736.5" width="1" height="1" fill="#666"/><rect x="400" y="736.5" width="1" height="1" fill="#666"/><rect x="402" y="736.5" width="1" height="1" fill="#666"/>
  <g fill="#fff">
    <path d="M383 741 H380 V746 H383 V745 H381 V742 H383 Z"/>
    <rect x="385" y="742" width="1.3" height="1.3"/><rect x="385" y="744.7" width="1.3" height="1.3"/>
    <path d="M388 740.5 L389.2 740.5 L392 746 L390.8 746 Z"/>
    <rect x="393" y="745" width="8.5" height="1.3"/>
  </g>
  <!-- python icon -->
  <polygon points="436,733.5 462,735.5 462,757 436.5,759" fill="#1f55c0"/>
  <polygon points="438,736.5 459.5,738 459.5,755 438.5,756.5" fill="#2c343c"/>
  <text x="439.5" y="743.5" font-family="Liberation Sans" font-size="5" fill="#7a8590">Python</text>
  <g transform="translate(444,740.2) scale(1.3)" stroke="#fff" stroke-width="0.7">
    <path d="M8 0.5 C4 0.5 4.2 2.2 4.2 2.2 V4 H8.1 V4.5 H2.8 C2.8 4.5 0.5 4.3 0.5 8 C0.5 11.7 2.5 11.6 2.5 11.6 H3.8 V9.8 C3.8 9.8 3.7 7.8 5.8 7.8 H9.7 C9.7 7.8 11.6 7.8 11.6 6 V2.5 C11.6 2.5 11.9 0.5 8 0.5 Z" fill="#3d74b0"/>
    <path d="M8 16 C12 16 11.8 14.3 11.8 14.3 V12.5 H7.9 V12 H13.2 C13.2 12 15.5 12.2 15.5 8.5 C15.5 4.8 13.5 4.9 13.5 4.9 H12.2 V6.7 C12.2 6.7 12.3 8.7 10.2 8.7 H6.3 C6.3 8.7 4.4 8.7 4.4 10.5 V14 C4.4 14 4.1 16 8 16 Z" fill="#f6c83a"/>
  </g>
  <!-- tray -->
  <polygon points="854,750 861,750 857.5,745.8" fill="#000"/>
  <path d="M875 740.5 V755.5" stroke="#fff" stroke-width="1.3"/>
  <path d="M876 741 Q880 740 882 742 Q885 743.5 888 742 V749 Q885 750.5 882 749 Q880 747 876 748 Z" fill="#fff" stroke="#888" stroke-width="0.5"/>
  <circle cx="885.2" cy="751.4" r="4.2" fill="#e02828"/>
  <path d="M883.5 749.7 L886.9 753.1 M886.9 749.7 L883.5 753.1" stroke="#fff" stroke-width="1.1"/>
  <rect x="899" y="741" width="4" height="7" rx="1.5" fill="#fff" stroke="#555" stroke-width="0.7"/>
  <path d="M901 748 V755" stroke="#555" stroke-width="0.8"/>
  <rect x="903" y="742" width="10" height="8" fill="none" stroke="#fff" stroke-width="1.4"/>
  <rect x="903" y="742" width="10" height="8" fill="none" stroke="#4b6a78" stroke-width="0.4"/>
  <path d="M908 750 V753 M904 754 H912" stroke="#fff" stroke-width="1.2"/>
  <polygon points="922.5,745 925.5,745 930,741 930,755 925.5,751 922.5,751" fill="#fff" stroke="#8a8a8a" stroke-width="0.5"/>
  <circle cx="933.8" cy="751.4" r="4.2" fill="#e02828"/>
  <path d="M932.1 749.7 L935.5 753.1 M935.5 749.7 L932.1 753.1" stroke="#fff" stroke-width="1.1"/>
</svg>
<div class="a" style="left:941px;top:735px;width:80px;text-align:center;font-size:12px;line-height:12px;letter-spacing:-0.1px">7:42 AM</div>
<div class="a" style="left:941.5px;top:751px;width:80px;text-align:center;font-size:12px;line-height:12px;letter-spacing:-0.1px">7/26/2017</div>


</body></html>
